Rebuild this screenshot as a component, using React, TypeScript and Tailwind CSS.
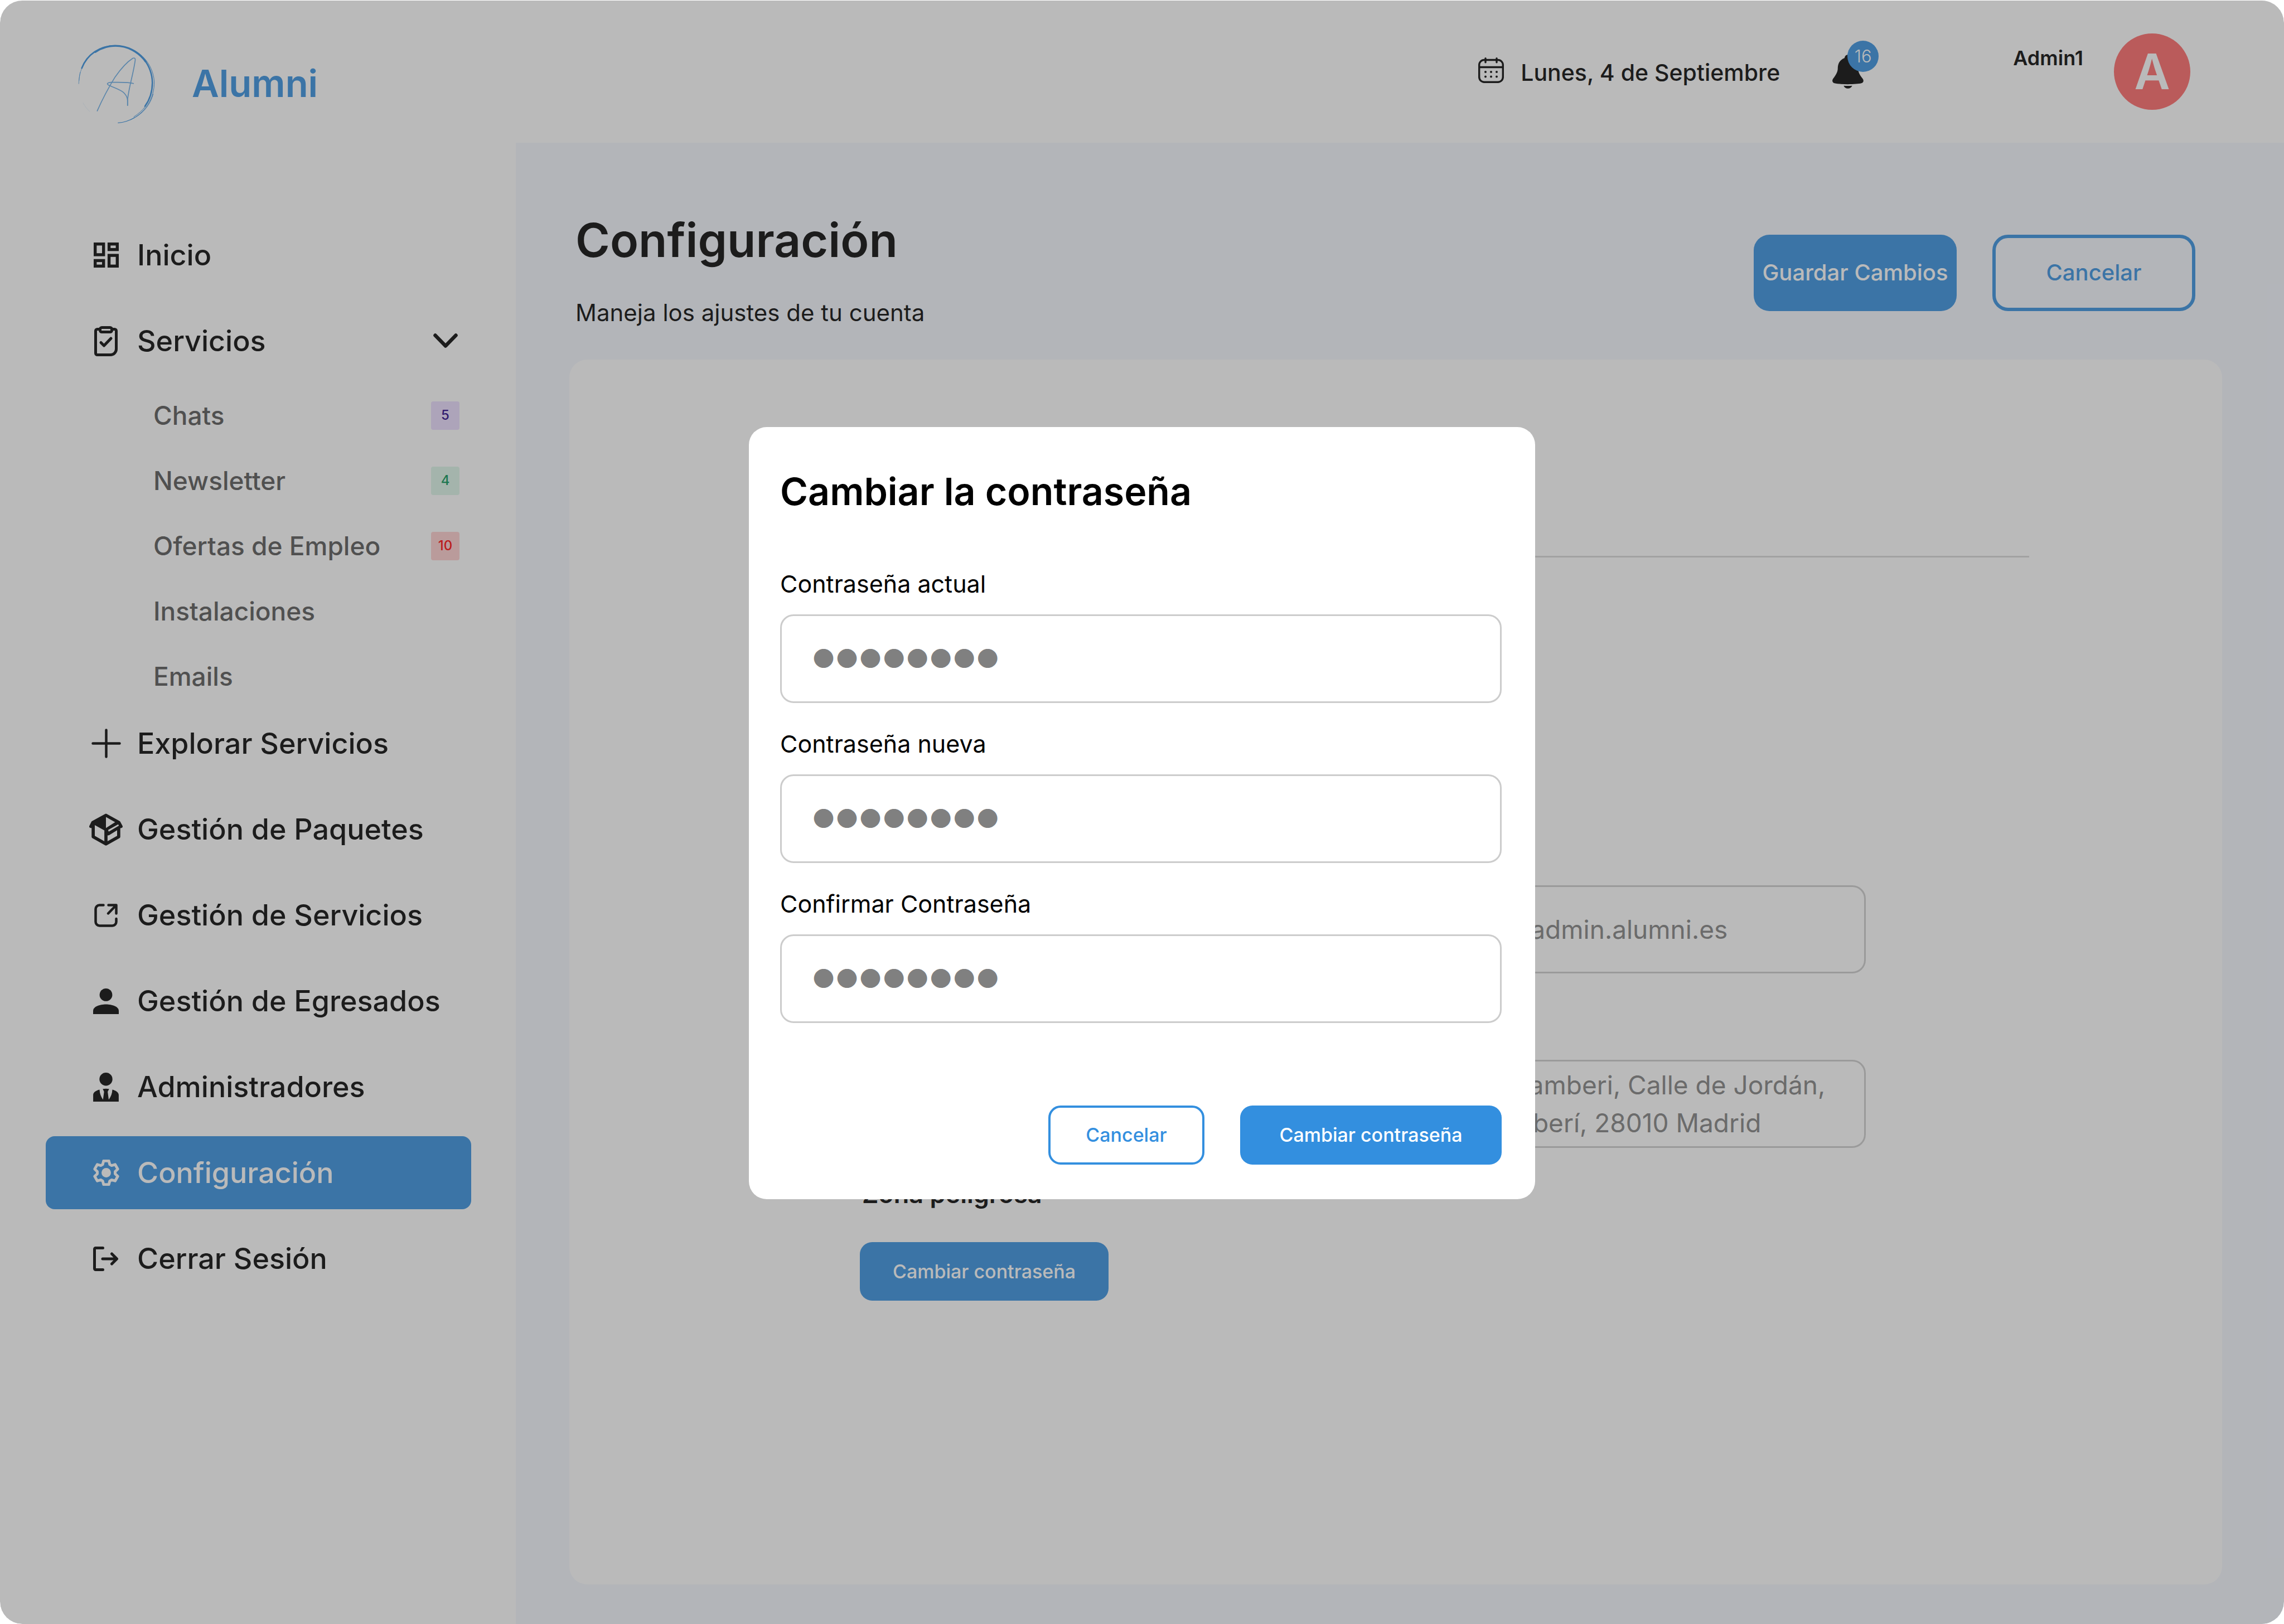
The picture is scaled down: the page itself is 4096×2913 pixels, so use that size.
import type { ReactNode } from "react";

/* ---------- Icons ---------- */

function DashboardIcon() {
  return (
    <svg viewBox="0 0 45 45" className="h-[45px] w-[45px]" fill="none" stroke="currentColor" strokeWidth="5.4" aria-hidden="true">
      <rect x="2.7" y="2.7" width="15" height="19.2" />
      <rect x="2.7" y="32.4" width="15" height="9.9" />
      <rect x="27.6" y="2.7" width="14.7" height="9.9" />
      <rect x="27.6" y="23.1" width="14.7" height="19.2" />
    </svg>
  );
}

function ClipboardIcon() {
  return (
    <svg viewBox="0 0 42 54" className="h-[54px] w-[42px]" fill="none" stroke="currentColor" strokeWidth="5" strokeLinecap="round" strokeLinejoin="round" aria-hidden="true">
      <path d="M10.5 5.5H5.5a3 3 0 0 0-3 3v40a3 3 0 0 0 3 3h23.5a10.5 10.5 0 0 0 10.5-10.5V8.5a3 3 0 0 0-3-3h-5" />
      <rect x="10.5" y="2.5" width="21" height="8" rx="3" />
      <path d="M12 29.5l5.5 5.5 12.5-13" />
    </svg>
  );
}

function ChevronIcon() {
  return (
    <svg viewBox="0 0 44 27" className="h-[27px] w-[44px]" fill="none" stroke="currentColor" strokeWidth="6.5" strokeLinecap="round" strokeLinejoin="round" aria-hidden="true">
      <path d="M3.5 3.5 22 22.5 40.5 3.5" />
    </svg>
  );
}

function PlusIcon() {
  return (
    <svg viewBox="0 0 53 53" className="h-[53px] w-[53px]" fill="none" stroke="currentColor" strokeWidth="4.5" strokeLinecap="round" aria-hidden="true">
      <path d="M26.5 2.5v48M2.5 26.5h48" />
    </svg>
  );
}

function BoxIcon() {
  return (
    <svg viewBox="27 38 252 242" className="h-[58px] w-[60px]" aria-hidden="true">
      <path
        fill="currentColor"
        fillRule="evenodd"
        d="M147 41q6-4 12 0l97 54q3 2 5 5l17 32q3 8-3 12-6 4-14 4v66q0 6-5 9l-97 55q-6 3-12 0l-97-55q-5-3-5-9v-67q-8 1-14-3-6-5-3-12l15-31q2-4 6-6zM153 65v82l69-44zM69 125v81l72 41v-82zM169 162l5 13 75-44q2-8-5-11zM165 203v44l72-41v-42l-56 35q-8 5-16 4z"
      />
    </svg>
  );
}

function ExternalIcon() {
  return (
    <svg viewBox="0 0 42 42" className="h-[42px] w-[42px]" fill="none" stroke="currentColor" strokeWidth="4.5" strokeLinecap="round" strokeLinejoin="round" aria-hidden="true">
      <path d="M16.5 2.5H9.5a7 7 0 0 0-7 7v23a7 7 0 0 0 7 7h23a7 7 0 0 0 7-7V27" />
      <path d="M25.5 2.5h14v15M39 3 25 17.5" />
    </svg>
  );
}

function PersonIcon() {
  return (
    <svg viewBox="0 0 46 46" className="h-[46px] w-[46px]" fill="currentColor" aria-hidden="true">
      <circle cx="23" cy="11.4" r="11.4" />
      <path d="M0 46v-5.5C0 32.5 12 28.6 23 28.6s23 3.9 23 11.9V46z" />
    </svg>
  );
}

function TieIcon() {
  return (
    <svg viewBox="51 48 192 218" className="h-[52px] w-[46px]" fill="currentColor" aria-hidden="true">
      <circle cx="147" cy="97" r="49" />
      <path d="M99 176c1 30 11 55 26 75l8-59-10-21c15-3 33-3 48 0l-11 21 8 59c17-22 26-46 27-75 24 6 48 19 48 40v50H51v-50c0-20 22-34 48-40z" />
    </svg>
  );
}

const gearOutline = Array.from({ length: 6 }, (_, tooth) => {
  const angle = (tooth * Math.PI) / 3;
  return [
    [-2.7, -6.3],
    [-2, -9],
    [2, -9],
    [2.7, -6.3],
  ]
    .map(([x, y]) => `${12 + x * Math.cos(angle) - y * Math.sin(angle)},${12 + x * Math.sin(angle) + y * Math.cos(angle)}`)
    .join(" ");
}).join(" ");

function GearIcon() {
  return (
    <svg viewBox="2 2 20 20" className="h-[47px] w-[47px]" aria-hidden="true">
      <polygon points={gearOutline} fill="none" stroke="currentColor" strokeWidth="2.1" strokeLinejoin="round" />
      <circle cx="12" cy="12" r="3.6" fill="currentColor" />
    </svg>
  );
}

function LogoutIcon() {
  return (
    <svg viewBox="0 0 46 44" className="h-[44px] w-[46px]" fill="none" stroke="currentColor" strokeWidth="5" strokeLinecap="round" strokeLinejoin="round" aria-hidden="true">
      <path d="M17.5 2.5h-13a2 2 0 0 0-2 2v35a2 2 0 0 0 2 2h13" />
      <path d="M17 22h25M33.5 13l9 9-9 9" />
    </svg>
  );
}

function CalendarIcon() {
  return (
    <svg viewBox="0 0 46 46" className="mb-1 h-[46px] w-[46px]" fill="none" stroke="currentColor" strokeWidth="3.4" strokeLinecap="round" aria-hidden="true">
      <rect x="1.7" y="4.5" width="42.6" height="39.8" rx="9" />
      <path d="M2 17.5h42M13 1.7v7M33 1.7v7" />
      <g fill="currentColor" stroke="none">
        <circle cx="13" cy="26" r="2" />
        <circle cx="23" cy="26" r="2" />
        <circle cx="33" cy="26" r="2" />
        <circle cx="13" cy="34.5" r="2" />
        <circle cx="23" cy="34.5" r="2" />
        <circle cx="33" cy="34.5" r="2" />
      </g>
    </svg>
  );
}

function BellIcon() {
  return (
    <svg viewBox="93 142 235 255" className="h-[61px] w-[56px]" fill="currentColor" aria-hidden="true">
      <path d="M185 167c2-14 10-24 25-24s24 10 26 24c34 13 51 42 51 78 0 31 17 55 34 77 12 17 5 30-10 35-34 10-168 10-202 0-15-5-21-20-10-35 18-24 35-48 35-77 0-38 18-66 51-78z" />
      <path d="M178 375c20 2 45 2 65 0-8 14-18 21-33 21s-25-7-32-21z" />
    </svg>
  );
}

function Logo() {
  return (
    <svg viewBox="50 62 582 602" className="h-[143px] w-[138px]" fill="none" stroke="#338fdf" strokeLinecap="round" strokeLinejoin="round" aria-hidden="true">
      <path d="M78 244C118 140 215 74 330 75" strokeWidth="11" />
      <path d="M180 122C225 92 275 75 330 75c95 0 178 45 230 118" strokeWidth="14" />
      <path d="M545 172c40 50 66 110 67 182 0 68-20 128-56 178" strokeWidth="11" />
      <path d="M395 80c120 22 222 130 231 264 4 132-75 242-180 291" strokeWidth="4" />
      <path d="M560 532c-24 32-54 58-88 80M618 440c-22 82-76 146-146 182" strokeWidth="4" />
      <path d="M475 619c-38 22-78 36-122 39" strokeWidth="5" />
      <path d="M78 244c-14 36-22 76-23 118M66 275c-5 22-8 42-8 62" strokeWidth="3" />
      <path d="M88 507c14 26 30 46 50 65" strokeWidth="1" opacity="0.5" />
      <g opacity="0.75" strokeWidth="7">
        <path d="M195 567c40-90 88-180 135-256 46-66 92-115 134-142 14-6 20 1 18 16-14 100-44 190-57 290v50" />
        <path d="M469 360c-40-12-110-8-170-9-24 2-36 10-20 20 60 30 138 42 145 115v40" />
      </g>
    </svg>
  );
}

/* ---------- Sidebar ---------- */

function NavItem({ icon, label, active = false, trailing }: { icon: ReactNode; label: string; active?: boolean; trailing?: ReactNode }) {
  return (
    <a
      href="#"
      aria-current={active ? "page" : undefined}
      className={
        active
          ? "flex h-[131px] items-center rounded-2xl bg-[#338fdf] pr-6 pl-[78px] text-white"
          : "flex h-[131px] items-center rounded-2xl pr-6 pl-[78px] text-black"
      }
    >
      <span className="flex w-[60px] shrink-0 justify-center">{icon}</span>
      <span className="ml-[26px] flex-1 text-[52px] leading-[64px] font-medium">{label}</span>
      {trailing}
    </a>
  );
}

const services = [
  { label: "Chats", count: "5", badge: "bg-[#ebdbff] text-[#250087]" },
  { label: "Newsletter", count: "4", badge: "bg-[#dbf5e8] text-[#039454]" },
  { label: "Ofertas de Empleo", count: "10", badge: "bg-[#ffcece] text-[#ff0000]" },
  { label: "Instalaciones" },
  { label: "Emails" },
];

function Sidebar() {
  return (
    <nav aria-label="Principal" className="w-[925px] shrink-0 bg-white pt-[136px] pr-20 pl-[82px]">
      <ul className="flex flex-col gap-[23px]">
        <li>
          <NavItem icon={<DashboardIcon />} label="Inicio" />
        </li>
        <li>
          <NavItem icon={<ClipboardIcon />} label="Servicios" trailing={<ChevronIcon />} />
          <ul className="mt-9 flex flex-col gap-[53px]">
            {services.map((service) => (
              <li key={service.label}>
                <a href="#" className="flex h-16 items-center justify-between pr-[21px] pl-[193px]">
                  <span className="text-[46px] leading-[64px] font-medium text-[#545454]">{service.label}</span>
                  {service.count && (
                    <span className={`flex h-[51px] w-[51px] items-center justify-center rounded text-[24px] font-medium ${service.badge}`}>
                      {service.count}
                    </span>
                  )}
                </a>
              </li>
            ))}
          </ul>
        </li>
        <li>
          <NavItem icon={<PlusIcon />} label="Explorar Servicios" />
        </li>
        <li>
          <NavItem icon={<BoxIcon />} label="Gestión de Paquetes" />
        </li>
        <li>
          <NavItem icon={<ExternalIcon />} label="Gestión de Servicios" />
        </li>
        <li>
          <NavItem icon={<PersonIcon />} label="Gestión de Egresados" />
        </li>
        <li>
          <NavItem icon={<TieIcon />} label="Administradores" />
        </li>
        <li>
          <NavItem icon={<GearIcon />} label="Configuración" active />
        </li>
        <li>
          <NavItem icon={<LogoutIcon />} label="Cerrar Sesión" />
        </li>
      </ul>
    </nav>
  );
}

/* ---------- Header ---------- */

function Header() {
  return (
    <header className="flex h-64 items-center justify-between bg-white pr-[168px] pl-[140px]">
      <div className="flex items-center gap-[66px] pt-11">
        <Logo />
        <span className="text-[67px] leading-[80px] font-semibold text-[#338fdf]">Alumni</span>
      </div>
      <div className="flex items-center">
        <div className="flex items-center gap-[30px]">
          <CalendarIcon />
          <span className="pt-1 text-[41px] leading-[56px] font-medium">Lunes, 4 de Septiembre</span>
        </div>
        <button type="button" aria-label="Notificaciones" className="relative ml-[94px]">
          <BellIcon />
          <span className="absolute -top-[25px] left-[27px] flex h-14 w-14 items-center justify-center rounded-full bg-[#338fdf] text-[31px] leading-none font-light text-white">
            16
          </span>
        </button>
        <span className="mb-12 ml-[268px] text-[36px] leading-[48px] font-semibold">Admin1</span>
        <span className="ml-[55px] flex h-[137px] w-[137px] items-center justify-center rounded-full bg-[#ff6666] text-[88px] leading-none font-semibold text-white">
          A
        </span>
      </div>
    </header>
  );
}

/* ---------- Settings page ---------- */

function Settings() {
  return (
    <main className="flex flex-1 flex-col bg-[#f4f7fe] pt-[125px] pr-[111px] pb-[71px] pl-24">
      <div className="flex items-center justify-between pr-12 pl-[11px]">
        <div>
          <h1 className="text-[84px] leading-[100px] font-semibold">Configuración</h1>
          <p className="mt-[52px] text-[42px] leading-[56px]">Maneja los ajustes de tu cuenta</p>
        </div>
        <div className="mt-2 flex gap-16 text-[40px] font-medium">
          <button type="button" className="h-[137px] w-[364px] rounded-[28px] bg-[#338fdf] whitespace-nowrap text-white">
            Guardar Cambios
          </button>
          <button type="button" className="h-[137px] w-[364px] rounded-[28px] border-[6px] border-[#338fdf] text-[#338fdf]">
            Cancelar
          </button>
        </div>
      </div>

      <section className="mt-14 flex flex-1 flex-col rounded-[32px] bg-white pt-[352px]">
        <hr className="mx-[346px] border-t-[3px] border-[#d9d9d9]" />
        <div className="mt-[503px] mr-[639px] flex w-[785px] flex-col gap-[70px] self-end">
          <div className="flex flex-col gap-[25px]">
            <label htmlFor="email" className="text-[43px] leading-[60px]">
              Email
            </label>
            <input
              id="email"
              type="email"
              defaultValue="ana@admin.alumni.es"
              className="h-[158px] rounded-3xl border-[3px] border-[#ccc] bg-white px-[58px] text-[46px] text-[#808080]"
            />
          </div>
          <div className="flex flex-col gap-[25px]">
            <label htmlFor="address" className="text-[43px] leading-[60px]">
              Dirección
            </label>
            <textarea
              id="address"
              rows={2}
              defaultValue={"C. Chamberi, Calle de Jordán,\nChamberí, 28010 Madrid"}
              className="h-[158px] resize-none overflow-hidden rounded-3xl border-[3px] border-[#ccc] bg-white py-2 pr-5 pl-[58px] text-[46px] leading-[68px] text-[#808080]"
            />
          </div>
        </div>
        <div className="mt-14 ml-[521px] flex flex-col items-start gap-[59px]">
          <h2 className="ml-1 text-[45px] leading-[54px] font-semibold">Zona peligrosa</h2>
          <button type="button" className="h-[105px] w-[446px] rounded-[22px] bg-[#338fdf] text-[34px] font-medium text-white">
            Cambiar contraseña
          </button>
        </div>
      </section>
    </main>
  );
}

/* ---------- Dialog ---------- */

const passwordFields = [
  { id: "current", label: "Contraseña actual" },
  { id: "next", label: "Contraseña nueva" },
  { id: "confirm", label: "Confirmar Contraseña" },
];

function PasswordDialog() {
  return (
    <form role="dialog" aria-modal="true" aria-labelledby="dialog-title" className="w-[1410px] rounded-[32px] bg-white pt-[75px] pr-[60px] pb-[62px] pl-14">
      <h2 id="dialog-title" className="text-[68px] leading-[80px] font-semibold">
        Cambiar la contraseña
      </h2>
      <div className="mt-24 flex flex-col gap-[43px]">
        {passwordFields.map((field) => (
          <div key={field.id} className="flex flex-col gap-[25px]">
            <label htmlFor={field.id} className="text-[43px] leading-[60px]">
              {field.label}
            </label>
            <input
              id={field.id}
              type="password"
              placeholder="●●●●●●●●"
              className="h-[159px] rounded-3xl border-[3px] border-[#ccc] bg-white px-[54px] text-[46px] placeholder:text-[#808080]"
            />
          </div>
        ))}
      </div>
      <div className="mt-[148px] flex justify-end gap-16 text-[34px] font-medium">
        <button type="button" className="h-[106px] w-[280px] rounded-[22px] border-4 border-[#338fdf] text-[#338fdf]">
          Cancelar
        </button>
        <button type="submit" className="h-[106px] w-[469px] rounded-[22px] bg-[#338fdf] text-white">
          Cambiar contraseña
        </button>
      </div>
    </form>
  );
}

export default function App() {
  return (
    <div className="relative flex min-h-screen flex-col overflow-hidden rounded-[40px] bg-white font-['Inter',sans-serif] text-black">
      <Header />
      <div className="flex flex-1">
        <Sidebar />
        <Settings />
      </div>
      <div className="absolute inset-x-0 top-px bottom-0 flex items-center justify-center rounded-[40px] bg-[#4a4a4a]/38 pt-0.5">
        <PasswordDialog />
      </div>
    </div>
  );
}
